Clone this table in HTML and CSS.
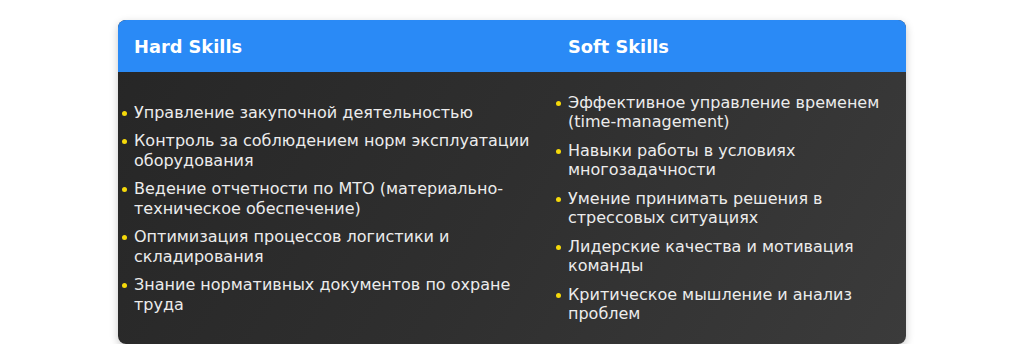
FILE: index.html
```html
<!DOCTYPE html>
<html lang="ru">
<head>
<meta charset="utf-8">
<link rel="stylesheet" href="styles.css">
</head>
<body>
<div class="wrap">
<table class="skills">
  <thead>
    <tr><th>Hard Skills</th><th>Soft Skills</th></tr>
  </thead>
  <tbody>
    <tr>
      <td>
        <ul>
          <li>Управление закупочной деятельностью</li>
          <li>Контроль за соблюдением норм эксплуатации оборудования</li>
          <li>Ведение отчетности по МТО (материально-техническое обеспечение)</li>
          <li>Оптимизация процессов логистики и складирования</li>
          <li>Знание нормативных документов по охране труда</li>
        </ul>
      </td>
      <td>
        <ul>
          <li>Эффективное управление временем (time-management)</li>
          <li>Навыки работы в условиях многозадачности</li>
          <li>Умение принимать решения в стрессовых ситуациях</li>
          <li>Лидерские качества и мотивация команды</li>
          <li>Критическое мышление и анализ проблем</li>
        </ul>
      </td>
    </tr>
  </tbody>
</table>
</div>
</body>
</html>
```
FILE: styles.css
```css
html, body { margin: 0; padding: 0; background: #fff; }
body { font-family: "DejaVu Sans", sans-serif; }
.wrap { padding: 20px 0 0 118px; }
.skills {
  width: 788px;
  border-collapse: separate;
  border-spacing: 0;
  border-radius: 8px;
  overflow: hidden;
  background: linear-gradient(120deg, #262626 0%, #2f2f2f 50%, #3b3b3b 100%);
  box-shadow: 0 3px 8px rgba(0,0,0,0.22);
}
.skills th {
  background: #2a8af6;
  color: #fff;
  font-size: 17.8px;
  font-weight: bold;
  text-align: left;
  padding: 1px 16px 0;
  height: 51px;
  line-height: 20px;
}
.skills th:first-child { width: 402px; }
.skills td {
  vertical-align: middle;
  padding: 21px 16px 21px;
  color: #ececec;
  font-size: 16px;
  line-height: 19.2px;
}
.skills ul { margin: 0; padding: 0; list-style: none; }
.skills li { position: relative; margin-bottom: 9.6px; }
.skills li:last-child { margin-bottom: 0; }
.skills li::before {
  content: "";
  position: absolute;
  left: -12px;
  top: 8px;
  width: 5px;
  height: 5px;
  border-radius: 50%;
  background: #f5d90a;
}
```
